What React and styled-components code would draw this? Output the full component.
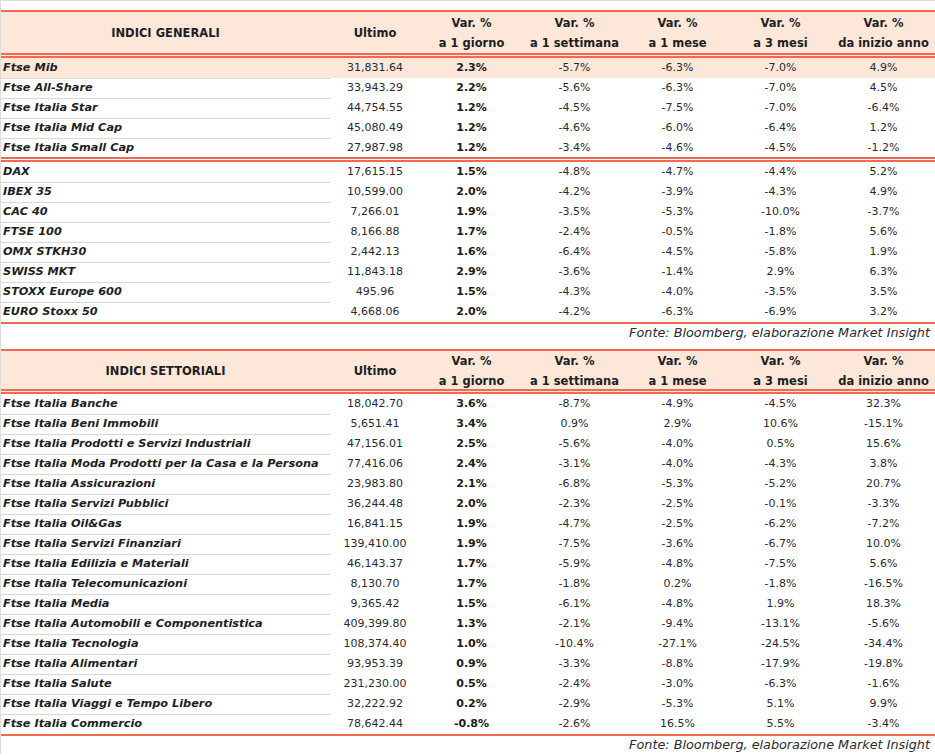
import styled, { createGlobalStyle } from "styled-components";

const ORANGE = "#f26852";
const PEACH = "#fce7d9";
const COLS = "329px 90px repeat(5, 103px)";

const Global = createGlobalStyle`
  html, body { margin:0; padding:0; background:#fff; }
  body { font-family:"DejaVu Sans", "Liberation Sans", sans-serif; color:#1e1e24; }
`;

const Page = styled.div`
  width:935px;
  box-sizing:border-box;
  border-top:1px solid #dcdcdc;
  border-left:1px solid #dcdcdc;
  padding-top:9px;
`;

const Table = styled.section`
  border-top:2px solid ${ORANGE};
  border-bottom:2px solid ${ORANGE};
`;

const Head = styled.div`
  display:grid;
  grid-template-columns:${COLS};
  height:${p => p.$h}px;
  background:${PEACH};
  border-bottom:5px double ${ORANGE};
  font-weight:bold;
  font-size:11.5px;
  line-height:20px;
`;

const HeadCell = styled.div`
  display:flex;
  flex-direction:column;
  align-items:center;
  justify-content:center;
  text-align:center;
  white-space:nowrap;
`;

const Group = styled.div`
  border-bottom:${p => (p.$sep ? `5px double ${ORANGE}` : "none")};
`;

const Row = styled.div`
  display:grid;
  grid-template-columns:${COLS};
  height:${p => p.$h || 20}px;
  background:${p => (p.$hl ? PEACH : "transparent")};
`;

const Label = styled.div`
  box-sizing:border-box;
  padding-left:2px;
  font-size:11.3px;
  font-weight:bold;
  font-style:oblique;
  line-height:20px;
  white-space:nowrap;
  border-bottom:${p => (p.$last ? "none" : "1px solid #d9d9d9")};
`;

const Val = styled.div`
  text-align:center;
  font-size:11px;
  line-height:20px;
  font-weight:${p => (p.$bold ? "bold" : "normal")};
  color:${p => (p.$bold ? "#1a1a20" : "#2a2a30")};
  white-space:nowrap;
`;

const Source = styled.div`
  text-align:right;
  padding-right:5px;
  font-size:12.8px;
  font-style:oblique;
  line-height:18px;
  color:#2a2a30;
  margin-bottom:${p => p.$mb || 0}px;
`;

const varCols = ["a 1 giorno", "a 1 settimana", "a 1 mese", "a 3 mesi", "da inizio anno"];

const generali = [
  [
    ["Ftse Mib", "31,831.64", "2.3%", "-5.7%", "-6.3%", "-7.0%", "4.9%"],
    ["Ftse All-Share", "33,943.29", "2.2%", "-5.6%", "-6.3%", "-7.0%", "4.5%"],
    ["Ftse Italia Star", "44,754.55", "1.2%", "-4.5%", "-7.5%", "-7.0%", "-6.4%"],
    ["Ftse Italia Mid Cap", "45,080.49", "1.2%", "-4.6%", "-6.0%", "-6.4%", "1.2%"],
    ["Ftse Italia Small Cap", "27,987.98", "1.2%", "-3.4%", "-4.6%", "-4.5%", "-1.2%"],
  ],
  [
    ["DAX", "17,615.15", "1.5%", "-4.8%", "-4.7%", "-4.4%", "5.2%"],
    ["IBEX 35", "10,599.00", "2.0%", "-4.2%", "-3.9%", "-4.3%", "4.9%"],
    ["CAC 40", "7,266.01", "1.9%", "-3.5%", "-5.3%", "-10.0%", "-3.7%"],
    ["FTSE 100", "8,166.88", "1.7%", "-2.4%", "-0.5%", "-1.8%", "5.6%"],
    ["OMX STKH30", "2,442.13", "1.6%", "-6.4%", "-4.5%", "-5.8%", "1.9%"],
    ["SWISS MKT", "11,843.18", "2.9%", "-3.6%", "-1.4%", "2.9%", "6.3%"],
    ["STOXX Europe 600", "495.96", "1.5%", "-4.3%", "-4.0%", "-3.5%", "3.5%"],
    ["EURO Stoxx 50", "4,668.06", "2.0%", "-4.2%", "-6.3%", "-6.9%", "3.2%"],
  ],
];

const settoriali = [
  [
    ["Ftse Italia Banche", "18,042.70", "3.6%", "-8.7%", "-4.9%", "-4.5%", "32.3%"],
    ["Ftse Italia Beni Immobili", "5,651.41", "3.4%", "0.9%", "2.9%", "10.6%", "-15.1%"],
    ["Ftse Italia Prodotti e Servizi Industriali", "47,156.01", "2.5%", "-5.6%", "-4.0%", "0.5%", "15.6%"],
    ["Ftse Italia Moda Prodotti per la Casa e la Persona", "77,416.06", "2.4%", "-3.1%", "-4.0%", "-4.3%", "3.8%"],
    ["Ftse Italia Assicurazioni", "23,983.80", "2.1%", "-6.8%", "-5.3%", "-5.2%", "20.7%"],
    ["Ftse Italia Servizi Pubblici", "36,244.48", "2.0%", "-2.3%", "-2.5%", "-0.1%", "-3.3%"],
    ["Ftse Italia Oil&Gas", "16,841.15", "1.9%", "-4.7%", "-2.5%", "-6.2%", "-7.2%"],
    ["Ftse Italia Servizi Finanziari", "139,410.00", "1.9%", "-7.5%", "-3.6%", "-6.7%", "10.0%"],
    ["Ftse Italia Edilizia e Materiali", "46,143.37", "1.7%", "-5.9%", "-4.8%", "-7.5%", "5.6%"],
    ["Ftse Italia Telecomunicazioni", "8,130.70", "1.7%", "-1.8%", "0.2%", "-1.8%", "-16.5%"],
    ["Ftse Italia Media", "9,365.42", "1.5%", "-6.1%", "-4.8%", "1.9%", "18.3%"],
    ["Ftse Italia Automobili e Componentistica", "409,399.80", "1.3%", "-2.1%", "-9.4%", "-13.1%", "-5.6%"],
    ["Ftse Italia Tecnologia", "108,374.40", "1.0%", "-10.4%", "-27.1%", "-24.5%", "-34.4%"],
    ["Ftse Italia Alimentari", "93,953.39", "0.9%", "-3.3%", "-8.8%", "-17.9%", "-19.8%"],
    ["Ftse Italia Salute", "231,230.00", "0.5%", "-2.4%", "-3.0%", "-6.3%", "-1.6%"],
    ["Ftse Italia Viaggi e Tempo Libero", "32,222.92", "0.2%", "-2.9%", "-5.3%", "5.1%", "9.9%"],
    ["Ftse Italia Commercio", "78,642.44", "-0.8%", "-2.6%", "16.5%", "5.5%", "-3.4%"],
  ],
];

function IndexTable({ title, groups, headH, highlightFirst }) {
  return (
    <Table>
      <Head $h={headH}>
        <HeadCell>{title}</HeadCell>
        <HeadCell>Ultimo</HeadCell>
        {varCols.map(v => (
          <HeadCell key={v}>
            <span>Var. %</span>
            <span>{v}</span>
          </HeadCell>
        ))}
      </Head>
      {groups.map((g, gi) => (
        <Group key={gi} $sep={gi < groups.length - 1}>
          {g.map((r, i) => {
            const last = i === g.length - 1;
            return (
              <Row
                key={r[0]}
                $hl={gi === 0 && i === 0 && highlightFirst}
                $h={last && gi < groups.length - 1 ? 19 : 20}
              >
                <Label $last={last}>{r[0]}</Label>
                <Val>{r[1]}</Val>
                {r.slice(2).map((v, k) => (
                  <Val key={k} $bold={k === 0}>{v}</Val>
                ))}
              </Row>
            );
          })}
        </Group>
      ))}
    </Table>
  );
}

export default function App() {
  return (
    <Page>
      <Global />
      <IndexTable title="INDICI GENERALI" groups={generali} headH={41} highlightFirst />
      <Source $mb={7}>Fonte: Bloomberg, elaborazione Market Insight</Source>
      <IndexTable title="INDICI SETTORIALI" groups={settoriali} headH={38} />
      <Source>Fonte: Bloomberg, elaborazione Market Insight</Source>
    </Page>
  );
}
